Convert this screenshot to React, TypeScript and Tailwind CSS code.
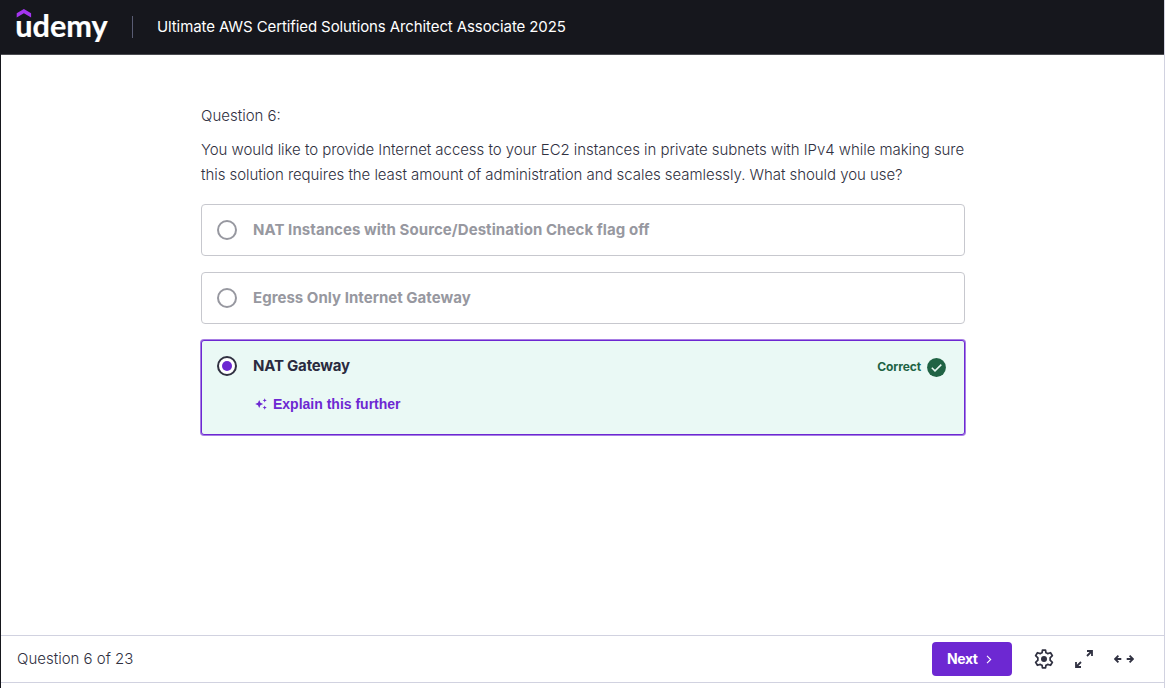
import React from "react";

function Logo() {
  return (
    <svg width="94" height="48" viewBox="0 0 94 48" className="block shrink-0" aria-label="udemy">
      <path d="M0.7 13.2 7.9 9 15.1 13.2v4.2L7.9 13.3 0.7 17.4z" fill="#a435f0" />
      <text x="-0.8" y="37" textLength="92.5" lengthAdjust="spacingAndGlyphs" fill="#fff" stroke="#fff" strokeWidth="0.2" className="font-['Lato',sans-serif] text-[30.5px] font-bold">
        udemy
      </text>
    </svg>
  );
}

function Radio({ checked = false }: { checked?: boolean }) {
  return (
    <span className={`flex size-5 shrink-0 items-center justify-center rounded-full border-2 bg-white ${checked ? "border-[#303141]" : "border-[#9798a0]"}`}>
      {checked && <span className="size-[10px] rounded-full bg-[#6d28d2]" />}
    </span>
  );
}

function Option({ label, className }: { label: string; className: string }) {
  return (
    <div className="flex h-[52px] items-center gap-4 rounded border border-[#c7c8ce] px-[15px]">
      <Radio />
      <span className={`whitespace-nowrap font-['Inter',sans-serif] text-[15px] font-bold text-[#9798a0] ${className}`}>{label}</span>
    </div>
  );
}

export default function App() {
  return (
    <div className="flex h-[688px] w-[1165px] flex-col overflow-hidden border-l border-l-[#16171d] border-r border-r-[#d1d2e0] bg-white font-['Inter',sans-serif] text-[#303141]">
      <header className="-mr-px flex h-[55px] shrink-0 items-center border-b border-[#4a4b50] bg-[#16171d] pl-[15px]">
        <div className="-mt-[6px] flex"><Logo /></div>
        <div className="ml-[22px] h-[22px] w-px bg-[#595c73]" />
        <h1 className="ml-6 whitespace-nowrap text-[15px] tracking-[-0.1px] text-white">Ultimate AWS Certified Solutions Architect Associate 2025</h1>
      </header>

      <main className="flex-1 pl-[200px] pt-[49px]">
        <div className="w-[764px]">
          <p className="h-6 whitespace-nowrap text-[15px] font-light leading-6">Question 6:</p>
          <div className="mt-[9px] whitespace-nowrap text-[15px] font-light leading-[25px] tracking-[-0.055px]">
            <p>You would like to provide Internet access to your EC2 instances in private subnets with IPv4 while making sure</p>
            <p>this solution requires the least amount of administration and scales seamlessly. What should you use?</p>
          </div>
          <div className="mt-[17px] flex flex-col gap-4">
            <Option label="NAT Instances with Source/Destination Check flag off" className="tracking-[0.065px]" />
            <Option label="Egress Only Internet Gateway" className="tracking-[0.03px]" />
            <div className="flex h-[95px] items-start rounded-[3px] border border-[#6d28d2] bg-[#eaf9f5] px-[15px] pt-[15px] ring-1 ring-[#6d28d2]/60">
              <Radio checked />
              <div className="ml-4">
                <p className="whitespace-nowrap text-[15px] font-bold leading-5 tracking-[-0.2px] text-[#2a2b3f]">NAT Gateway</p>
                <div className="mt-[18px] flex items-center pl-[2px] text-[#6d28d2]">
                  <svg width="12" height="12" viewBox="0 0 12 12" fill="currentColor">
                    <path d="M4.2 2 5.4 4.8 8.2 6 5.4 7.2 4.2 10 3 7.2.2 6 3 4.8zM9.7 0.3l.6 1.5 1.5.6-1.5.6-.6 1.5-.6-1.5-1.5-.6 1.5-.6zM9.7 7.5l.6 1.5 1.5.6-1.5.6-.6 1.5-.6-1.5-1.5-.6 1.5-.6z" />
                  </svg>
                  <span className="ml-[6px] whitespace-nowrap font-['Liberation_Sans',sans-serif] text-[14px] font-bold leading-5">Explain this further</span>
                </div>
              </div>
              <div className="ml-auto mr-[3px] flex items-center gap-[6px] text-[#206344]">
                <span className="text-[12px] font-bold tracking-[-0.1px]">Correct</span>
                <svg width="19" height="19" viewBox="0 0 19 19" className="mt-[2px]">
                  <circle cx="9.5" cy="9.5" r="9.4" fill="#206344" />
                  <path d="m4.8 9.7 3.2 3.2 6.3-6.3" fill="none" stroke="#eaf9f5" strokeWidth="1.5" />
                </svg>
              </div>
            </div>
          </div>
        </div>
      </main>

      <footer className="flex h-[48px] shrink-0 items-center border-y border-[#d1d2e0] pl-4">
        <span className="whitespace-nowrap text-[15px] font-light">Question 6 of 23</span>
        <button className="ml-auto flex h-[34px] w-[80px] items-center rounded bg-[#6d28d2] pl-[15px] text-white">
          <span className="-mt-px text-[14px] font-bold tracking-[-0.4px]">Next</span>
          <svg width="6" height="9" viewBox="0 0 6 9" className="ml-2" fill="none" stroke="currentColor" strokeWidth="1.1">
            <path d="m1 .8 3.7 3.7L1 8.2" />
          </svg>
        </button>
        <svg width="20" height="20" viewBox="1 1 22 22" className="ml-[22px]" fill="none" stroke="currentColor" strokeWidth="1.9" strokeLinejoin="round">
          <path d="M18.7 13.2Q18.9 12 18.7 10.8L21.2 8.4 19.2 5.1 16 6.1Q15 5.3 14.1 5L13.7 2.2H10.3L9.9 5Q9 5.3 8 6.1L4.8 5.1 2.8 8.4 5.3 10.8Q5.1 12 5.3 13.2L2.8 15.6 4.8 18.9 8 17.9Q9 18.7 9.9 19L10.3 21.8H13.7L14.1 19Q15 18.7 16 17.9L19.2 18.9 21.2 15.6Z" />
          <circle cx="12" cy="12" r="3.3" fill="currentColor" stroke="none" />
        </svg>
        <svg width="20" height="20" viewBox="0 0 20 20" className="ml-5" fill="none" stroke="currentColor" strokeWidth="1.8">
          <path d="M13 2h5v5M18 2l-5 5M2 13v5h5M2 18l5-5" />
        </svg>
        <svg width="20" height="20" viewBox="0 0 20 20" className="ml-5 mr-[30px]" fill="none" stroke="currentColor" strokeWidth="1.8">
          <path d="M4.4 6.6 1.1 10l3.3 3.4M1 10h6.3M15.6 6.6l3.3 3.4-3.3 3.4M19 10h-6.3" />
        </svg>
      </footer>
      <div className="h-[5px] shrink-0" />
    </div>
  );
}
